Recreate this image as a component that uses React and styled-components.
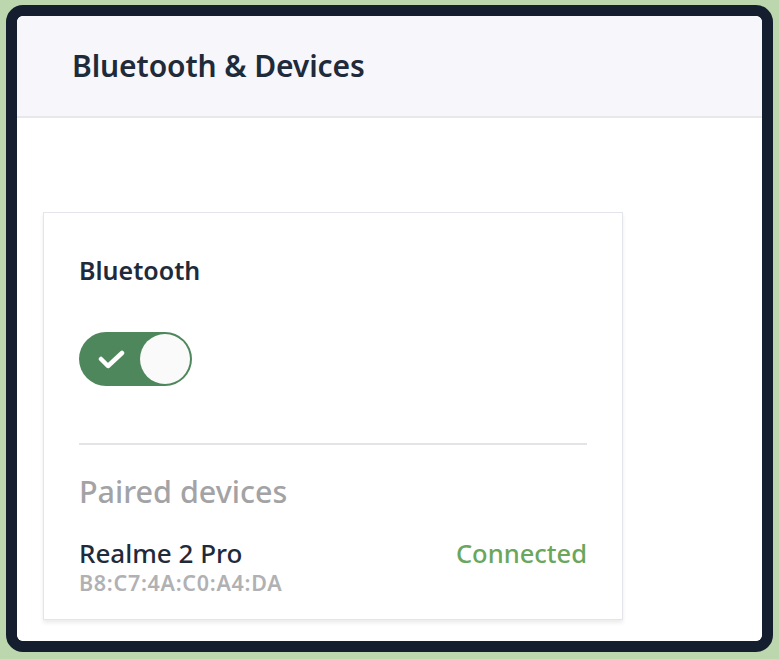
import React from 'react'
import styled, { createGlobalStyle } from 'styled-components'

const Global = createGlobalStyle`
  html, body {
    margin: 0;
    padding: 0;
    background: #bcd7ae;
    font-family: "Noto Sans", "Open Sans", sans-serif;
  }
  #root {
    width: 779px;
    height: 659px;
    padding: 5px 6px 7px 6px;
    box-sizing: border-box;
  }
`

const Frame = styled.div`
  width: 767px;
  height: 647px;
  box-sizing: border-box;
  border: 11px solid #141e2f;
  border-radius: 17px;
  background: #ffffff;
  overflow: hidden;
  display: flex;
  flex-direction: column;
`

const Inner = styled.div`
  flex: 1;
  border-radius: 6px;
  overflow: hidden;
  background: #fff;
  display: flex;
  flex-direction: column;
`

const Header = styled.header`
  height: 100px;
  flex-shrink: 0;
  display: flex;
  align-items: center;
  padding-left: 55px;
  background: #f7f7fb;
  border-bottom: 2px solid #e7e7ec;
`

const Title = styled.h1`
  margin: 0;
  font-size: 30px;
  font-weight: 600;
  line-height: 36px;
  color: #1f2a3a;
  letter-spacing: -0.1px;
`

const Content = styled.main`
  padding: 94px 26px 0 26px;
`

const Card = styled.section`
  width: 580px;
  height: 408px;
  box-sizing: border-box;
  border: 1px solid #e3e5ea;
  box-shadow: 0 3px 4px rgba(0, 0, 0, 0.08);
  padding: 42px 35px 0 35px;
  display: flex;
  flex-direction: column;
`

const Label = styled.div`
  font-size: 25px;
  font-weight: 600;
  line-height: 30px;
  color: #1f2a3a;
`

const Toggle = styled.div`
  margin-top: 47px;
  width: 113px;
  height: 54px;
  box-sizing: border-box;
  border-radius: 27px;
  background: ${p => (p.on ? '#4e875c' : '#c9c9cf')};
  display: flex;
  align-items: center;
  justify-content: space-between;
  padding: 0 2px 0 19px;
`

const Knob = styled.div`
  width: 50px;
  height: 50px;
  border-radius: 50%;
  background: #fafafa;
`

const Divider = styled.hr`
  margin: 57px 0 0 0;
  border: none;
  height: 2px;
  background: #e4e4e8;
`

const SectionTitle = styled.div`
  margin-top: 28px;
  font-size: 30.5px;
  font-weight: 500;
  line-height: 36px;
  color: #a3a3a6;
`

const DeviceRow = styled.div`
  margin-top: 29px;
  display: flex;
  justify-content: space-between;
  align-items: flex-start;
`

const DeviceName = styled.div`
  font-size: 26px;
  font-weight: 500;
  line-height: 30px;
  color: #1f2a3a;
`

const DeviceMac = styled.div`
  margin-top: 4px;
  font-size: 21.5px;
  font-weight: 600;
  line-height: 22px;
  color: #b1b1b4;
  letter-spacing: 0.7px;
`

const Status = styled.div`
  font-size: 25.5px;
  font-weight: 500;
  line-height: 30px;
  color: ${p => p.color || '#6aa65c'};
`

const Check = () => (
  <svg width="28" height="22" viewBox="0 0 28 22">
    <polyline points="3,11 10,18 24,5" fill="none" stroke="#fff" strokeWidth="4.5" strokeLinecap="round" strokeLinejoin="round" />
  </svg>
)

export default function App() {
  return (
    <>
      <Global />
      <Frame>
        <Inner>
          <Header>
            <Title>Bluetooth &amp; Devices</Title>
          </Header>
          <Content>
            <Card>
              <Label>Bluetooth</Label>
              <Toggle on>
                <Check />
                <Knob />
              </Toggle>
              <Divider />
              <SectionTitle>Paired devices</SectionTitle>
              <DeviceRow>
                <div>
                  <DeviceName>Realme 2 Pro</DeviceName>
                  <DeviceMac>B8:C7:4A:C0:A4:DA</DeviceMac>
                </div>
                <Status>Connected</Status>
              </DeviceRow>
            </Card>
          </Content>
        </Inner>
      </Frame>
    </>
  )
}
